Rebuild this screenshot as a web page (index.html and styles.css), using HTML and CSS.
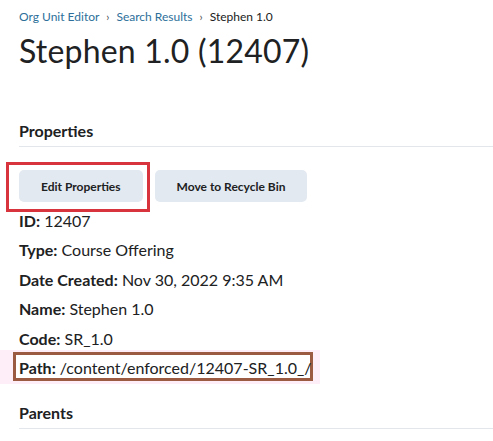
FILE: index.html
```html
<!DOCTYPE html>
<html lang="en">
<head>
<meta charset="utf-8">
<title>Stephen 1.0 (12407)</title>
<link rel="stylesheet" href="styles.css">
</head>
<body>
<main class="page">
  <nav class="crumbs">
    <a class="crumb-link" href="#">Org Unit Editor</a>
    <span class="crumb-sep">›</span>
    <a class="crumb-link" href="#">Search Results</a>
    <span class="crumb-sep">›</span>
    <span class="crumb-current">Stephen 1.0</span>
  </nav>
  <h1 class="title">Stephen 1.0 (12407)</h1>

  <section class="props">
    <h2 class="section-head">Properties</h2>
    <div class="actions">
      <span class="mark-red"><button class="btn">Edit Properties</button></span>
      <button class="btn">Move to Recycle Bin</button>
    </div>
    <div class="rows">
      <div class="row"><b>ID:</b> 12407</div>
      <div class="row"><b>Type:</b> Course Offering</div>
      <div class="row"><b>Date Created:</b> Nov 30, 2022 9:35 AM</div>
      <div class="row"><b>Name:</b> Stephen 1.0</div>
      <div class="row"><b>Code:</b> SR_1.0</div>
      <div class="row mark-brown"><b>Path:</b> /content/enforced/12407-SR_1.0_/</div>
    </div>
  </section>

  <section class="parents">
    <h2 class="section-head">Parents</h2>
  </section>
</main>
</body>
</html>
```

FILE: styles.css
```css
* { box-sizing: border-box; }
html, body { margin: 0; background: #fff; }
body {
  font-family: Lato, "Open Sans", sans-serif;
  color: #202122;
}
.page { padding: 10px 0 0 19px; overflow: hidden; }

.crumbs {
  display: flex;
  align-items: center;
  gap: 7px;
  font-size: 12px;
  line-height: 14px;
  height: 14px;
}
.crumb-link { color: #2d6f9a; text-decoration: none; }
.crumb-sep { color: #494c4e; font-size: 11px; }
.crumb-current { color: #202122; }

.title {
  margin: 3px 0 0;
  font-size: 32px;
  font-weight: 400;
  line-height: 48px;
  letter-spacing: 0.2px;
}

.section-head {
  margin: 0;
  font-size: 16px;
  font-weight: 700;
  line-height: 20px;
  padding-bottom: 5px;
  border-bottom: 1px solid #e3e6ea;
}
.props { margin-top: 46px; }

.actions {
  display: flex;
  gap: 12px;
  margin-top: 23px;
}
.btn {
  font-family: Lato, "Open Sans", sans-serif;
  font-size: 12px;
  font-weight: 700;
  color: #202122;
  background: #e3e9f1;
  border: none;
  border-radius: 5px;
  height: 32px;
  padding: 0 22px;
}
.mark-red { position: relative; display: flex; }
.mark-red::after {
  content: "";
  position: absolute;
  top: -8px; bottom: -10px; left: -13px; right: -7px;
  border: 3px solid #d8343d;
  pointer-events: none;
}

.rows {
  display: flex;
  flex-direction: column;
  gap: 5.4px;
  margin-top: 7px;
  font-size: 16px;
  line-height: 24px;
}
.row b { font-weight: 700; }
.mark-brown { position: relative; z-index: 0; }
.mark-brown::before {
  content: "";
  position: absolute;
  top: -6px; bottom: -4px; left: -19px; right: 173px;
  background: #fdeef8;
  z-index: -2;
}
.mark-brown::after {
  content: "";
  position: absolute;
  top: -4px; bottom: -1px; left: -6px; right: 180px;
  background: #fff;
  border: 3px solid #9a5b42;
  z-index: -1;
}

.parents { margin-top: 23px; }
```
